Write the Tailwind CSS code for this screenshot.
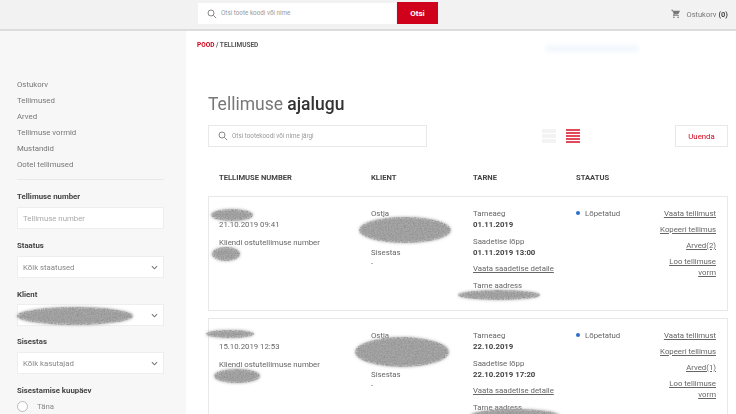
<!DOCTYPE html>
<html lang="et">
<head>
  <meta charset="UTF-8">
  <title>Tellimuse ajalugu</title>
  <script src="https://cdn.jsdelivr.net/npm/@tailwindcss/browser@4"></script>
</head>
<body class="bg-white font-['Roboto',sans-serif] text-[7.8px] leading-[11px] text-[#666]">
<div class="relative w-[736px] h-[414px] overflow-hidden blur-[0.4px]">

  <!-- Header -->
  <header class="flex h-[31px] bg-[#f2f2f2] border-b-2 border-[#dcdcdc]">
    <div class="w-[198px]"></div>
    <div class="flex items-center w-[198px] h-[21px] mt-[3px] bg-white pl-[9px] text-[#999] text-[6.3px]">
      <svg class="w-[10px] h-[10px] mr-[4px]" viewBox="0 0 12 12" fill="none" stroke="#888" stroke-width="1.2"><circle cx="4.8" cy="4.8" r="3.6"/><path d="M7.6 7.6 11 11"/></svg>
      Otsi toote koodi või nime
    </div>
    <button class="w-[41px] h-[22px] mt-[2px] ml-[1px] bg-[#d0021b] text-white text-[8px] font-bold">Otsi</button>
    <div class="flex items-center ml-auto mr-[8px] h-[28px] text-[7.5px] text-[#777]">
      <svg class="w-[10px] h-[10px] mr-[5px]" viewBox="0 0 24 24" fill="#777"><path d="M7 18a2 2 0 1 0 0 4 2 2 0 0 0 0-4zm10 0a2 2 0 1 0 0 4 2 2 0 0 0 0-4zM1 2v2h2l3.6 7.6L5.2 14c-.7 1.3.2 3 1.8 3h12v-2H7.400l1.100-2h7.500c.7 0 1.400-.4 1.700-1L21.800 4H5.200l-.9-2H1z"/></svg>
      <span class="mr-[2px]">Ostukorv</span><b class="text-[#444]">(0)</b>
    </div>
  </header>

  <div class="flex h-[383px]">
    <!-- Sidebar -->
    <aside class="w-[186px] shrink-0 bg-[#f7f7f7] pl-[17px] pr-[22px] pt-[48px]">
      <nav class="flex flex-col gap-[5px] pb-[9px] border-b border-[#e8e8e8] text-[#777]">
        <a>Ostukorv</a>
        <a>Tellimused</a>
        <a>Arved</a>
        <a>Tellimuse vormid</a>
        <a>Mustandid</a>
        <a>Ootel tellimused</a>
      </nav>
      <label class="block mt-[11px] mb-[5px] text-[7.8px] font-bold text-[#444]">Tellimuse number</label>
      <div class="flex items-center h-[22px] px-[5px] bg-white border border-[#eee] text-[#aaa]">Tellimuse number</div>
      <label class="block mt-[11px] mb-[5px] text-[7.8px] font-bold text-[#444]">Staatus</label>
      <div class="flex items-center justify-between h-[22px] px-[5px] bg-white border border-[#eee] text-[#888]">Kõik staatused
        <svg class="w-[7px] h-[5px]" viewBox="0 0 8 5" fill="none" stroke="#777" stroke-width="1.2"><path d="m1 1 3 3 3-3"/></svg>
      </div>
      <label class="block mt-[11px] mb-[4px] text-[7.8px] font-bold text-[#444]">Klient</label>
      <div class="flex items-center justify-end h-[22px] px-[5px] bg-white border border-[#eee]">
        <svg class="w-[7px] h-[5px]" viewBox="0 0 8 5" fill="none" stroke="#777" stroke-width="1.2"><path d="m1 1 3 3 3-3"/></svg>
      </div>
      <label class="block mt-[10px] mb-[5px] text-[7.8px] font-bold text-[#444]">Sisestas</label>
      <div class="flex items-center justify-between h-[22px] px-[5px] bg-white border border-[#eee] text-[#888]">Kõik kasutajad
        <svg class="w-[7px] h-[5px]" viewBox="0 0 8 5" fill="none" stroke="#777" stroke-width="1.2"><path d="m1 1 3 3 3-3"/></svg>
      </div>
      <label class="block mt-[11px] mb-[5px] text-[7.8px] font-bold text-[#444]">Sisestamise kuupäev</label>
      <div class="flex items-center gap-[9px] text-[#888]"><span class="w-[11px] h-[11px] rounded-full bg-white border border-[#bbb]"></span>Täna</div>
    </aside>

    <!-- Main -->
    <main class="relative flex-1 pl-[22px] pr-[8px]">
      <div class="ml-[-11px] mt-[9px] text-[6.5px] font-bold text-[#555]"><span class="text-[#d0021b]">POOD</span> / TELLIMUSED</div>
      <div class="absolute left-[360px] top-[14px] w-[92px] h-[7px] bg-[#f1f7fd] blur-[2px]"></div>

      <h1 class="mt-[40px] text-[17.5px] leading-[26px] text-[#777]">Tellimuse <b class="font-medium text-[#333]">ajalugu</b></h1>

      <div class="flex items-center mt-[8px] h-[22px]">
        <div class="flex items-center w-[219px] h-[22px] pl-[9px] border border-[#e8e8e8] text-[#999] text-[6.3px]">
          <svg class="w-[10px] h-[10px] mr-[4px]" viewBox="0 0 12 12" fill="none" stroke="#888" stroke-width="1.2"><circle cx="4.8" cy="4.8" r="3.6"/><path d="M7.6 7.6 11 11"/></svg>
          Otsi tootekoodi või nime järgi
        </div>
        <div class="ml-[115px] w-[14px] h-[14px] flex flex-col justify-between">
          <i class="h-[4px] bg-[#f3f3f3]"></i><i class="h-[4px] bg-[#f3f3f3]"></i><i class="h-[4px] bg-[#f3f3f3]"></i>
        </div>
        <div class="ml-[10px] w-[14px] h-[14px] flex flex-col justify-between">
          <i class="h-[2px] bg-[#e04a5a]"></i><i class="h-[2px] bg-[#e04a5a]"></i><i class="h-[2px] bg-[#e04a5a]"></i><i class="h-[2px] bg-[#e04a5a]"></i><i class="h-[2px] bg-[#e04a5a]"></i>
        </div>
        <button class="ml-auto w-[53px] h-[22px] border border-[#e8e8e8] text-[#d0021b]">Uuenda</button>
      </div>

      <!-- Table head -->
      <div class="flex mt-[25px] pl-[11px] text-[7.6px] font-bold text-[#444]">
        <div class="w-[152px]">TELLIMUSE NUMBER</div>
        <div class="w-[102px]">KLIENT</div>
        <div class="w-[103px]">TARNE</div>
        <div>STAATUS</div>
      </div>

      <!-- Orders -->
      <div class="mt-[13px] flex flex-col gap-[7px]">
        <article class="flex h-[115px] pl-[10px] pr-[11px] pt-[11px] border border-[#e8e8e8]">
          <div class="w-[152px] pt-[11px]">
            <p>21.10.2019 09:41</p>
            <p class="mt-[7px]">Kliendi ostutellimuse number</p>
          </div>
          <div class="w-[102px]">
            <p>Ostja</p>
            <p class="mt-[28px]">Sisestas</p>
            <p>-</p>
          </div>
          <div class="w-[103px]">
            <p>Tarneaeg</p>
            <p class="font-bold text-[#444]">01.11.2019</p>
            <p class="mt-[6px]">Saadetise lõpp</p>
            <p class="font-bold text-[#444]">01.11.2019 13:00</p>
            <p class="mt-[5px] underline">Vaata saadetise detaile</p>
            <p class="mt-[6px]">Tarne aadress</p>
          </div>
          <div class="flex-1 flex items-start">
            <span class="w-[4px] h-[4px] mt-[3px] mr-[5px] rounded-full bg-[#2a6fc9]"></span>Lõpetatud
          </div>
          <div class="w-[60px] flex flex-col items-end text-right gap-[5px] underline">
            <a>Vaata tellimust</a>
            <a>Kopeeri tellimus</a>
            <a>Arved(2)</a>
            <a>Loo tellimuse vorm</a>
          </div>
        </article>
        <article class="flex h-[115px] pl-[10px] pr-[11px] pt-[11px] border border-[#e8e8e8]">
          <div class="w-[152px] pt-[11px]">
            <p>15.10.2019 12:53</p>
            <p class="mt-[7px]">Kliendi ostutellimuse number</p>
          </div>
          <div class="w-[102px]">
            <p>Ostja</p>
            <p class="mt-[28px]">Sisestas</p>
            <p>-</p>
          </div>
          <div class="w-[103px]">
            <p>Tarneaeg</p>
            <p class="font-bold text-[#444]">22.10.2019</p>
            <p class="mt-[6px]">Saadetise lõpp</p>
            <p class="font-bold text-[#444]">22.10.2019 17:20</p>
            <p class="mt-[5px] underline">Vaata saadetise detaile</p>
            <p class="mt-[6px]">Tarne aadress</p>
          </div>
          <div class="flex-1 flex items-start">
            <span class="w-[4px] h-[4px] mt-[3px] mr-[5px] rounded-full bg-[#2a6fc9]"></span>Lõpetatud
          </div>
          <div class="w-[60px] flex flex-col items-end text-right gap-[5px] underline">
            <a>Vaata tellimust</a>
            <a>Kopeeri tellimus</a>
            <a>Arved(1)</a>
            <a>Loo tellimuse vorm</a>
          </div>
        </article>
      </div>
    </main>
  </div>

  <!-- Redaction scribbles over the private values -->
  <svg class="absolute left-0 top-0 w-[736px] h-[414px] pointer-events-none" viewBox="0 0 736 414">
    <defs>
      <filter id="scribble" x="-20%" y="-40%" width="140%" height="180%">
        <feTurbulence type="fractalNoise" baseFrequency="0.7" numOctaves="2" seed="4" result="n"/>
        <feColorMatrix in="n" type="matrix" values="0 0 0 0 .3  0 0 0 0 .3  0 0 0 0 .3  2.4 0 0 0 -.75" result="g"/>
        <feComposite in="g" in2="SourceGraphic" operator="in" result="c"/>
        <feGaussianBlur in="SourceGraphic" stdDeviation="1.4" result="s"/>
        <feMerge><feMergeNode in="s"/><feMergeNode in="c"/></feMerge>
      </filter>
    </defs>
    <g fill="#a8a8a8" filter="url(#scribble)">
      <ellipse cx="232" cy="215" rx="21" ry="6"/>
      <ellipse cx="226" cy="254" rx="14" ry="7"/>
      <ellipse cx="405" cy="230" rx="46" ry="13"/>
      <ellipse cx="499" cy="295" rx="41" ry="5"/>
      <ellipse cx="75" cy="316" rx="58" ry="9"/>
      <ellipse cx="230" cy="334" rx="24" ry="4"/>
      <ellipse cx="237" cy="376" rx="23" ry="7"/>
      <ellipse cx="402" cy="352" rx="47" ry="15"/>
      <ellipse cx="515" cy="416" rx="45" ry="7"/>
    </g>
  </svg>
</div>
</body>
</html>
